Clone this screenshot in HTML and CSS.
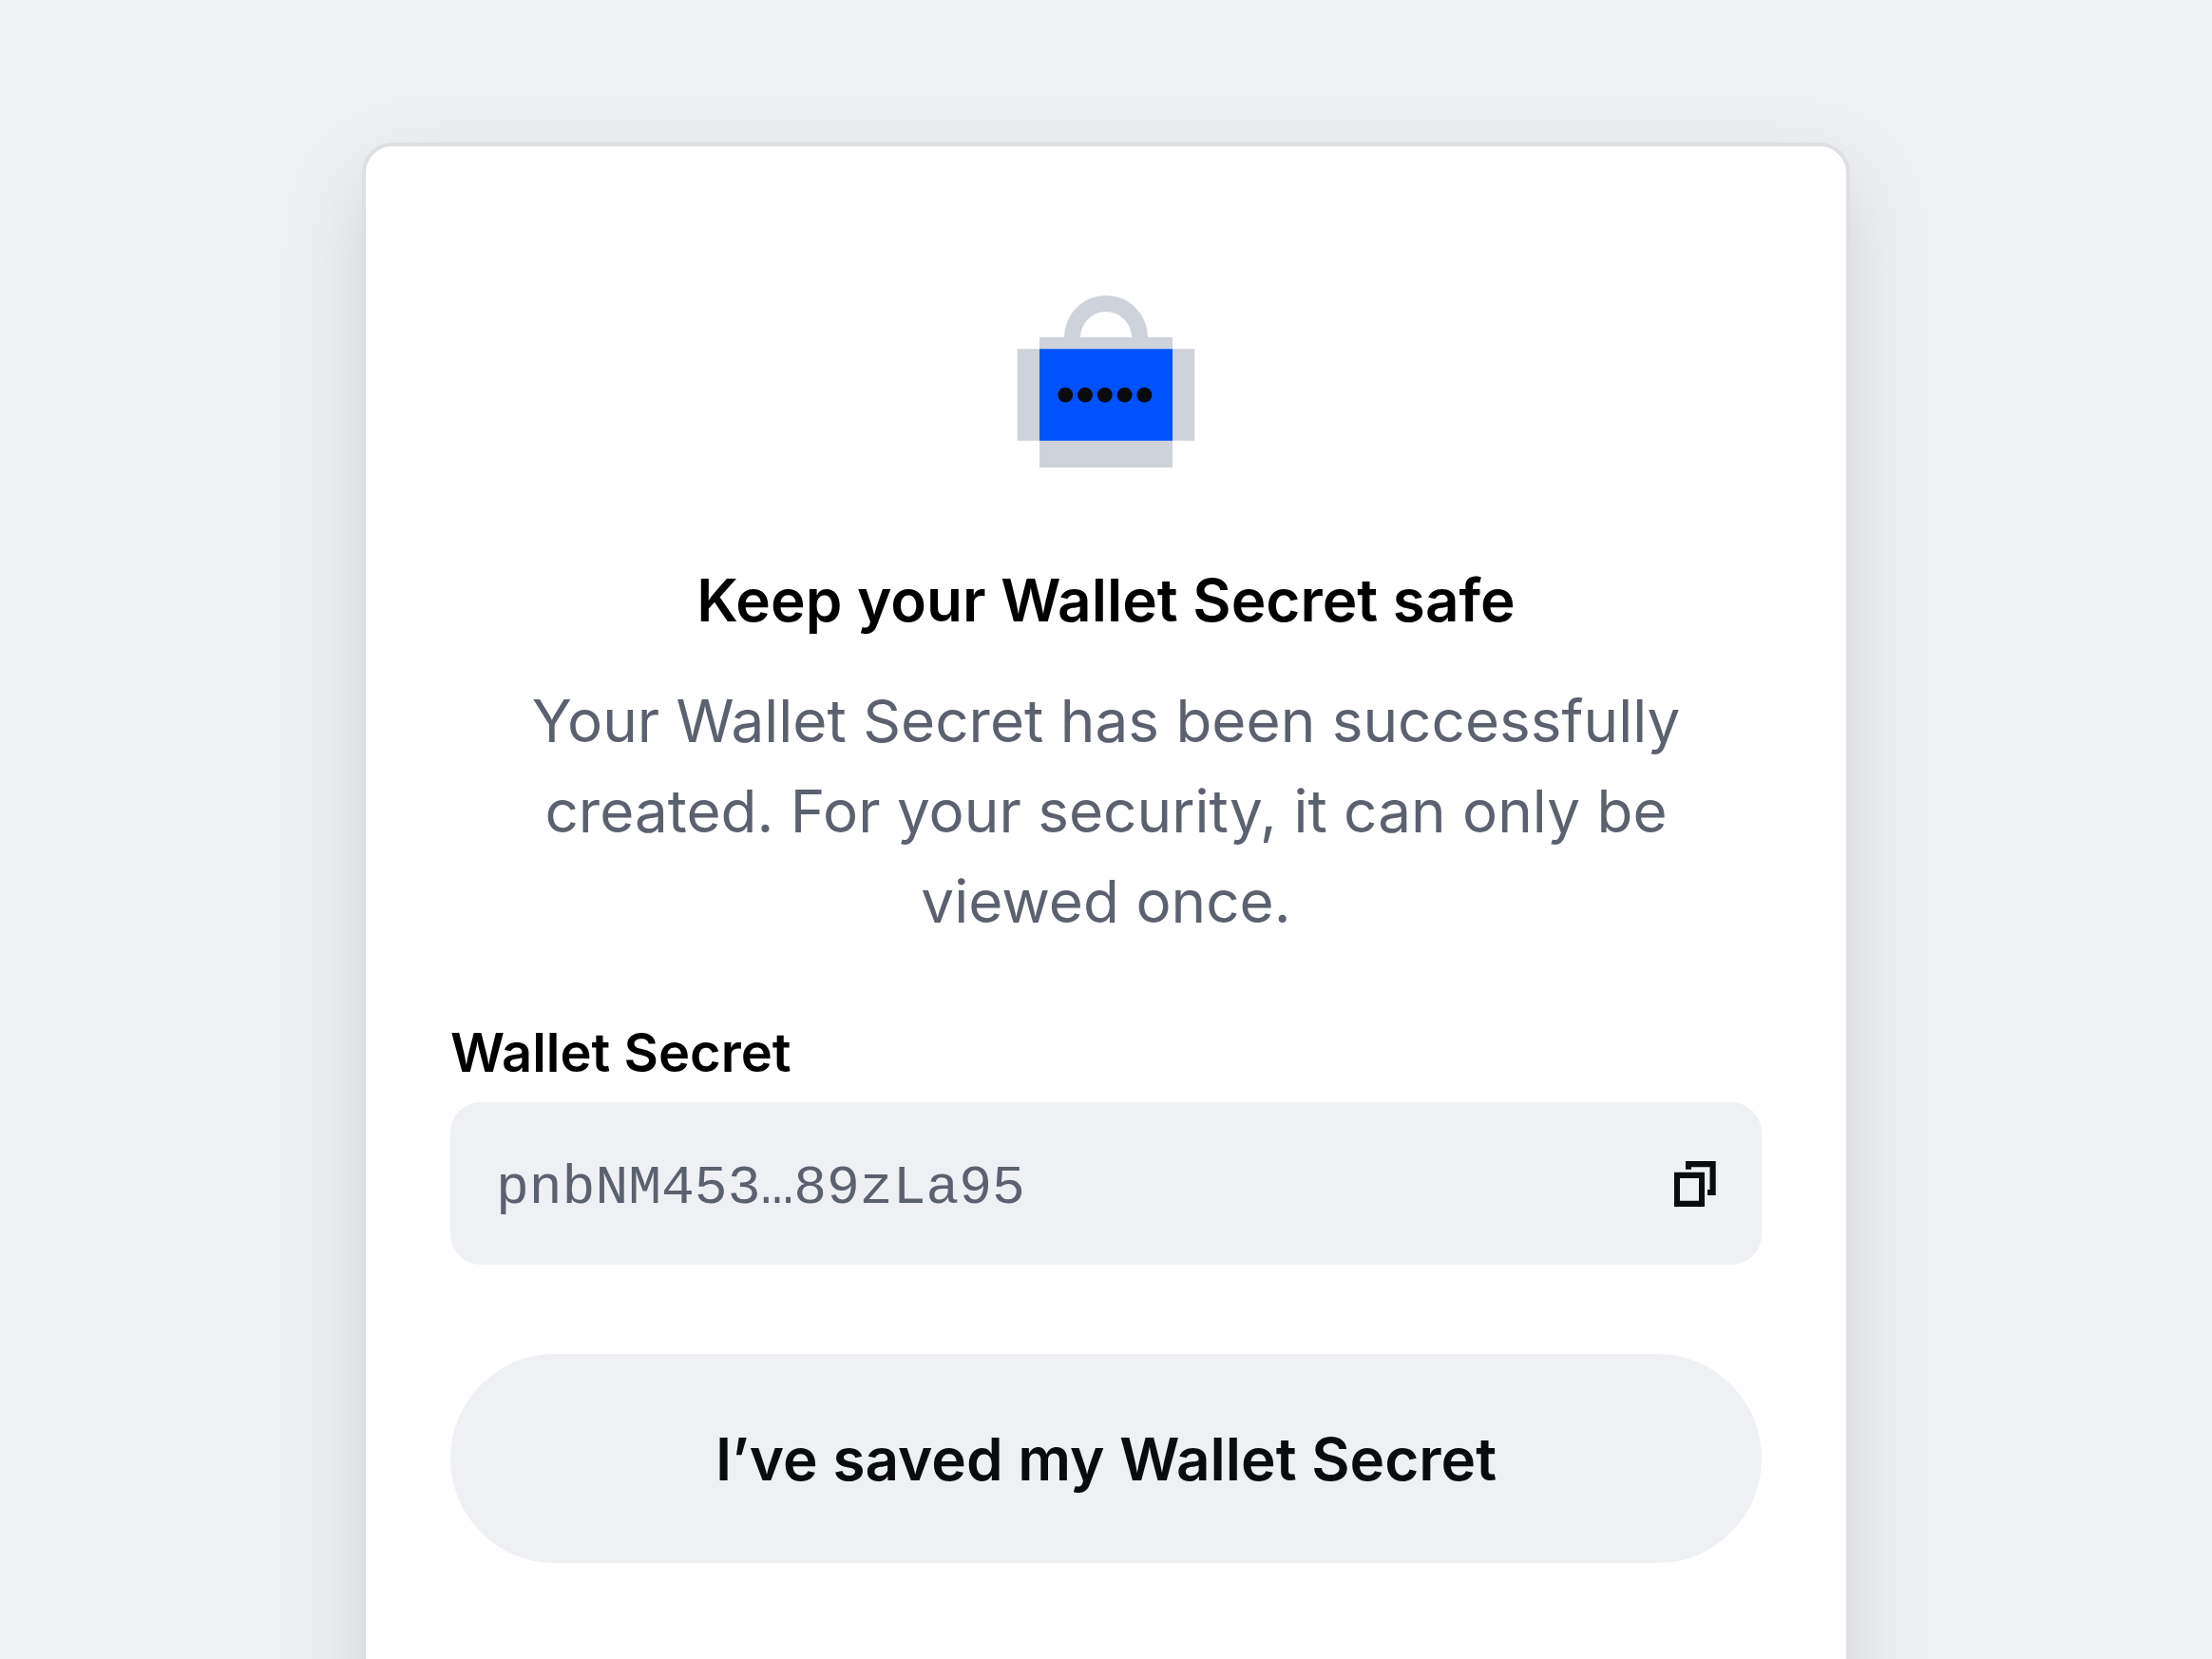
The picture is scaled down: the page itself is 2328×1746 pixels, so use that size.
FILE: index.html
```
<!DOCTYPE html>
<html lang="en">
<head>
    <meta charset="UTF-8">
    <title>Wallet Secret</title>
    <link rel="stylesheet" href="styles.css">
</head>
<body>
    <div class="page">
        <main class="card">
            <svg class="lock" viewBox="0 0 188 182" aria-hidden="true">
                <path d="M50 45a44 44 0 0 1 88 0h-17a27 27 0 0 0-54 0z" fill="#ced2db"/>
                <path d="M24 45h140v137H24z" fill="#ced2db"/>
                <path d="M.7 57.3h186.6v96.4H.7z" fill="#ced2db"/>
                <path d="M24 57.3h140v96.4H24z" fill="#0052ff"/>
                <g fill="#0a0b0d">
                    <circle cx="51.2" cy="105.7" r="7.9"/>
                    <circle cx="72" cy="105.7" r="7.9"/>
                    <circle cx="92.8" cy="105.7" r="7.9"/>
                    <circle cx="113.6" cy="105.7" r="7.9"/>
                    <circle cx="134.4" cy="105.7" r="7.9"/>
                </g>
            </svg>
            <h1 class="title">Keep your Wallet Secret safe</h1>
            <p class="desc">Your Wallet Secret has been successfully created. For your security, it can only be viewed once.</p>
            <label class="label" for="secret">Wallet Secret</label>
            <div class="field">
                <input class="secret" id="secret" type="text" value="pnbNM453…89zLa95" readonly>
                <button class="copy" type="button" aria-label="Copy">
                    <svg viewBox="0 0 44 48" aria-hidden="true">
                        <path d="M0 11.7h32V48H0zM6 18v23.7h20V18z" fill="#0a0b0d" fill-rule="evenodd"/>
                        <path d="M12 0h31.7v36H35v-6h2.5V6.3H18v2.4h-6z" fill="#0a0b0d"/>
                    </svg>
                </button>
            </div>
            <button class="saved" type="button">I’ve saved my Wallet Secret</button>
        </main>
    </div>
</body>
</html>
```
FILE: styles.css
```
* {
    box-sizing: border-box;
}
body {
    margin: 0;
    background-color: #eef0f3;
    font-family: Inter, "Liberation Sans", sans-serif;
    color: #000;
}
.page {
    height: 100vh;
    padding: 150px 381px 0;
    overflow: hidden;
}
.card {
    display: flex;
    flex-direction: column;
    padding: 156px 89px 240px;
    border: 4px solid #dedfe3;
    border-radius: 32px;
    background-color: #fff;
    box-shadow: 0 32px 90px rgba(0, 0, 0, 0.12);
}
.lock {
    width: 188px;
    height: 182px;
    margin: 0 auto 92px;
}
.title {
    margin: 0 0 32px;
    font-size: 62px;
    line-height: 95px;
    font-weight: 600;
    text-align: center;
}
.desc {
    margin: 0 0 76px;
    padding: 0 64px;
    font-size: 62px;
    line-height: 95px;
    text-align: center;
    color: #5b616e;
}
.label {
    margin-bottom: 16px;
    font-size: 56px;
    line-height: 72px;
    font-weight: 600;
}
.field {
    display: flex;
    align-items: center;
    margin-bottom: 94px;
    padding: 0 48px;
    border-radius: 32px;
    background-color: #eef0f3;
}
.secret {
    flex: 1;
    min-width: 0;
    height: 171px;
    padding: 10px 0 0;
    border: 0;
    outline: none;
    background: none;
    font-family: "Liberation Mono", monospace;
    font-size: 58px;
    color: #5b616e;
}
.copy {
    padding: 0;
    border: 0;
    background: none;
    cursor: pointer;
}
.copy svg {
    display: block;
    width: 44px;
    height: 48px;
}
.saved {
    height: 220px;
    border: 0;
    border-radius: 110px;
    background-color: #eef0f3;
    font-family: inherit;
    font-size: 62px;
    font-weight: 600;
    color: #0a0b0d;
    cursor: pointer;
}
```
